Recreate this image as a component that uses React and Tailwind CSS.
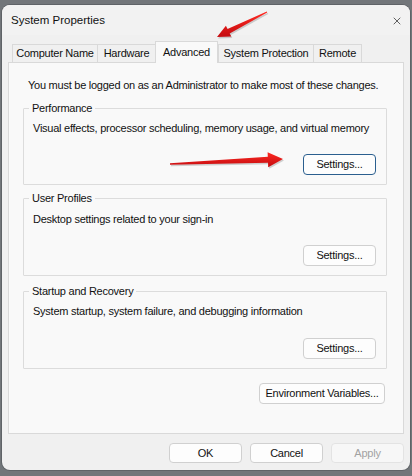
import { X } from 'lucide-react';

const tabs = [
  { label: 'Computer Name', width: 'w-[85px]' },
  { label: 'Hardware', width: 'w-[58px]' },
  { label: 'Advanced', width: 'w-[63px]', active: true },
  { label: 'System Protection', width: 'w-[95px]' },
  { label: 'Remote', width: 'w-[49px]', last: true },
];

function DialogButton({ children, width = 'w-[73px]', height = 'h-[20px]', focused, disabled }) {
  const border = focused
    ? 'border-[#2b5f8f]'
    : disabled
      ? 'border-[#e3e3e3]'
      : 'border-[#d0d0d0]';
  return (
    <button
      disabled={disabled}
      className={`${width} ${height} rounded-[4px] border ${border} ${
        disabled ? 'bg-[#f7f7f7] text-[#a2a2a2]' : 'bg-[#fdfdfd] text-[#111]'
      } flex items-center justify-center leading-none`}
    >
      {children}
    </button>
  );
}

function Group({ title, text, textGap, buttonGap, spacing, focused }) {
  return (
    <fieldset className={`w-[364px] border border-[#dcdcdc] rounded-[1px] pl-[9px] pr-[10px] pb-[9px] ${spacing}`}>
      <legend className="ml-[-4px] px-[3px] h-[14px] leading-[14px]">{title}</legend>
      <p className={`${textGap} leading-[14px]`}>{text}</p>
      <div className={`${buttonGap} flex justify-end`}>
        <DialogButton focused={focused} height="h-[21px]">Settings...</DialogButton>
      </div>
    </fieldset>
  );
}

// Red annotation arrows drawn over the dialog
function Arrows() {
  return (
    <svg className="absolute inset-0 pointer-events-none" width="412" height="476" viewBox="0 0 412 476">
      <defs>
        <linearGradient id="redShaft" x1="0" y1="0" x2="0" y2="1">
          <stop offset="0" stopColor="#ff2a22" />
          <stop offset="1" stopColor="#c40c10" />
        </linearGradient>
      </defs>
      <g opacity="0.25" fill="#555">
        <polygon points="268.2,13.9 230.7,34.9 232.3,38.1 218,38.5 226.9,27.3 228.5,30.5 267.8,13.05" />
        <polygon points="171,166.3 269,164.2 269.2,168.7 284,160.5 268.6,153.7 268.8,158.2 171,164.7" />
      </g>
      <polygon
        points="267.2,12.4 229.7,33.4 231.3,36.6 217,37 225.9,25.8 227.5,29 266.8,11.6"
        fill="url(#redShaft)"
      />
      <polygon
        points="170,164.8 268,162.7 268.2,167.2 283,159 267.6,152.2 267.8,156.7 170,163.2"
        fill="url(#redShaft)"
      />
    </svg>
  );
}

export default function App() {
  return (
    <div className="relative w-[412px] h-[476px] bg-[#72767a] pt-[5px] px-[2px] font-['Liberation_Sans',Arial,sans-serif] text-[11px] tracking-[-0.25px] text-[#111]">
      <div className="h-[465px] rounded-[8px] bg-[#f0f0f0] flex flex-col overflow-hidden shadow-[0_0_0_1px_#5f6367]">
        {/* Title bar */}
        <div className="h-[30px] flex items-center justify-between pl-[9px] pr-[7px] pt-[2px] bg-[#f2f2f2]">
          <span className="text-[11.5px] tracking-normal">System Properties</span>
          <X className="w-[12px] h-[12px] text-[#222]" strokeWidth={1.4} />
        </div>

        {/* Tab strip */}
        <div className="pt-[6px] pl-[10px] flex items-end">
          {tabs.map((tab) =>
            tab.active ? (
              <div
                key={tab.label}
                className={`${tab.width} h-[22px] mb-[-1px] relative z-10 bg-[#f9f9f9] border border-b-0 border-[#d9d9d9] flex items-center justify-center pb-[1px]`}
              >
                {tab.label}
              </div>
            ) : (
              <div
                key={tab.label}
                className={`${tab.width} h-[18px] bg-[#f0f0f0] border-t border-l ${tab.last ? 'border-r' : ''} border-[#d9d9d9] flex items-center justify-center`}
              >
                {tab.label}
              </div>
            )
          )}
        </div>

        {/* Tab page */}
        <div className="ml-[6px] w-[396px] h-[372px] border border-[#d9d9d9] bg-[#f9f9f9] pl-[14px] pt-[15px] flex flex-col">
          <p className="ml-[5px] leading-[14px]">
            You must be logged on as an Administrator to make most of these changes.
          </p>

          <Group
            title="Performance"
            text="Visual effects, processor scheduling, memory usage, and virtual memory"
            spacing="mt-[9px]"
            textGap="mt-[6px]"
            buttonGap="mt-[19px]"
            focused
          />
          <Group
            title="User Profiles"
            text="Desktop settings related to your sign-in"
            spacing="mt-[6px]"
            textGap="mt-[7px]"
            buttonGap="mt-[19px]"
          />
          <Group
            title="Startup and Recovery"
            text="System startup, system failure, and debugging information"
            spacing="mt-[8px]"
            textGap="mt-[6px]"
            buttonGap="mt-[20px]"
          />

          <div className="w-[364px] mt-[14px] pr-[2px] flex justify-end">
            <DialogButton width="w-[126px]" height="h-[21px]">Environment Variables...</DialogButton>
          </div>
        </div>

        {/* Dialog buttons */}
        <div className="mt-[9px] pr-[6px] flex justify-end gap-[8px]">
          <DialogButton>OK</DialogButton>
          <DialogButton>Cancel</DialogButton>
          <DialogButton disabled>Apply</DialogButton>
        </div>
      </div>
      <Arrows />
    </div>
  );
}
